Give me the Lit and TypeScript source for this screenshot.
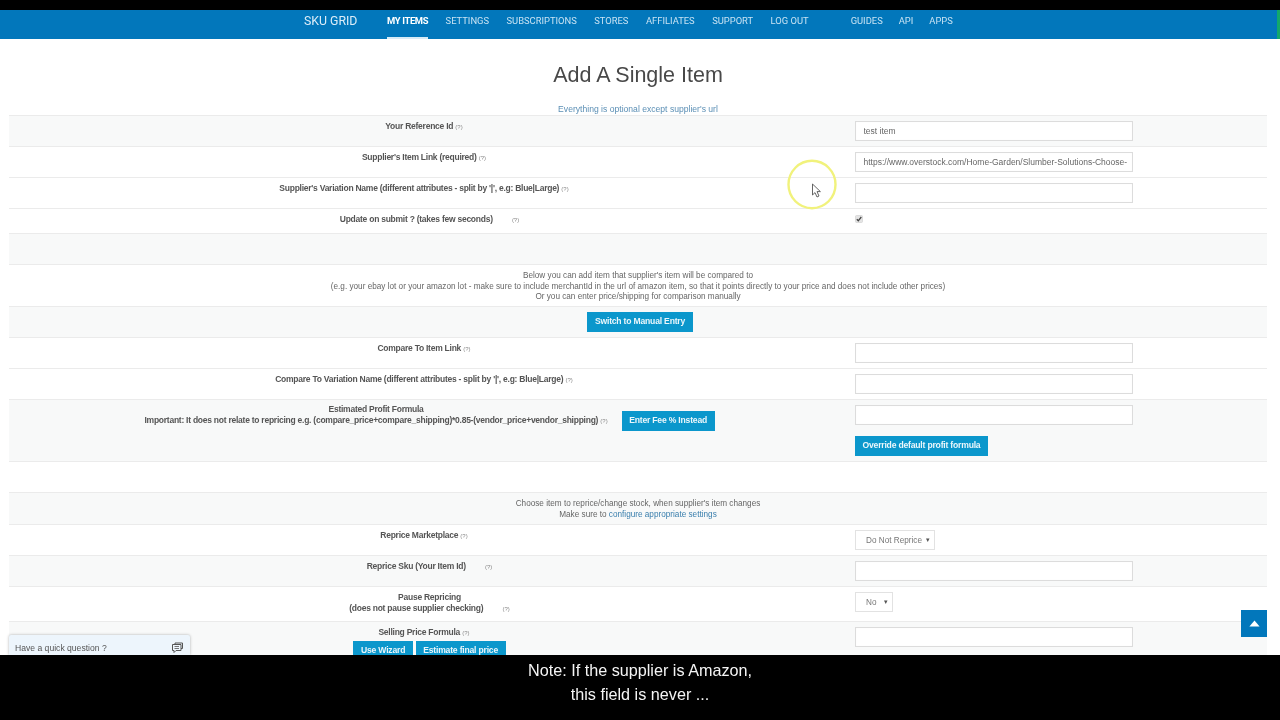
import { LitElement, html, css, nothing } from "lit";
import { customElement } from "lit/decorators.js";

type Row = {
  kind?: string;
  label?: string[];
  gapQ?: boolean;
  tone?: string;
  control?: unknown;
};

const input = (v = "") => html`<input class="field" .value=${v} />`;
const pick = (v: string, cls: string) =>
  html`<div class="pick ${cls}"><span>${v}</span><i>▾</i></div>`;

@customElement("app-root")
export class AppRoot extends LitElement {
  static styles = css`
    :host { display: flex; flex-direction: column; width: 1280px; height: 720px; position: relative; overflow: hidden; background: #fff; font-family: "Liberation Sans", Arial, sans-serif; filter: blur(0.35px); }
    .top { height: 10px; background: #000; flex: none; }
    nav { height: 29px; flex: none; background: #0277bb; display: flex; color: #c9e3f3; font-family: Roboto, "Liberation Sans", sans-serif; font-size: 9.4px; }
    .brand { margin-left: 304px; width: 83px; font-size: 12.3px; line-height: 23px; color: #dcedf8; }
    .links { display: flex; gap: 17.5px; }
    .links a { line-height: 21px; box-sizing: border-box; height: 29px; }
    .links a.on { color: #fff; font-weight: 700; letter-spacing: -0.35px; border-bottom: 2px solid #d8ebf6; }
    .links.second { margin-left: 42px; gap: 16px; }
    .edge { margin-left: auto; width: 3px; background: #13a86b; }
    main { flex: 1; min-height: 0; overflow: hidden; padding: 0 13px 0 9px; }
    h1 { margin: 0; padding-top: 23px; height: 37px; line-height: 26px; font-weight: 400; text-align: center; color: #484848; font-size: 21.5px; }
    .sub { text-align: center; font-size: 8.6px; line-height: 10px; height: 16px; padding-top: 5px; color: #5b8fb5; box-sizing: border-box; }
    .row { display: grid; grid-template-columns: 830px 1fr; border-top: 1px solid #ebebeb; padding: 5px 0; box-sizing: border-box; min-height: 31px; }
    .row.gray { background: #f8f9f9; }
    .row.check { min-height: 25px; }
    .row.tall { min-height: 35px; }
    .row.fee { min-height: 62px; }
    .row.text { display: block; text-align: center; font-size: 8.2px; line-height: 10.67px; color: #666; padding: 6px 0 3px; min-height: 0; }
    .row.text.two { height: 32px; }
    .row.text a { color: #3a7fad; }
    .row.center { display: flex; justify-content: center; padding-left: 4px; }
    .label { text-align: center; font-size: 8.5px; letter-spacing: -0.25px; line-height: 10.67px; color: #555; font-weight: 700; }
    .label.shift { padding-left: 11px; }
    .q { font-size: 6px; letter-spacing: 0; font-weight: 400; color: #888; }
    .q.gap { margin-left: 17px; }
    .value { padding-left: 16px; display: flex; flex-direction: column; align-items: flex-start; }
    .box { margin-top: 1px; }
    .field { box-sizing: border-box; width: 278px; height: 20px; margin: 0; border: 1px solid #dcdcdc; background: #fff; padding: 0 4px 0 7.5px; font: 8.5px "Liberation Sans", Arial, sans-serif; color: #666; outline: none; box-shadow: inset 0 0 1px #eee; }
    .pick { box-sizing: border-box; height: 20px; border: 1px solid #e2e2e2; background: #fff; display: flex; align-items: center; justify-content: space-between; padding: 0 4px 0 10px; font-size: 8.2px; color: #777; }
    .pick i { font-style: normal; font-size: 7px; color: #555; }
    .pick.wide { width: 80px; }
    .pick.small { width: 38px; }
    .btn { display: inline-block; box-sizing: border-box; height: 20px; line-height: 19px; background: #0b97cc; color: #eaf6fb; font-size: 8.6px; letter-spacing: -0.2px; font-weight: 700; padding: 0 7.5px; white-space: nowrap; }
    .over { margin-top: 10.5px; }
    .fee-label { display: flex; justify-content: center; align-items: flex-start; padding-left: 11px; margin-top: -1px; }
    .fee-label .btn { margin-left: 14px; margin-top: 7px; }
    .btns { display: flex; justify-content: center; gap: 3px; margin-top: 2px; padding-left: 11px; }
    .caption { height: 65px; flex: none; background: #000; color: #f4f4f4; text-align: center; font-size: 16.2px; line-height: 24px; padding-top: 3px; box-sizing: border-box; }
    .chat { position: absolute; left: 9px; top: 635px; width: 181px; height: 20px; background: #edf5fc; border-radius: 2px 2px 0 0; box-shadow: 0 0 3px rgba(0,0,0,.3); display: flex; align-items: center; justify-content: space-between; padding: 5px 6px 0 6px; box-sizing: border-box; font-size: 8.6px; color: #555; }
    .up { position: absolute; left: 1241px; top: 610px; width: 26px; height: 27px; background: #0277bb; display: flex; align-items: center; justify-content: center; }
    .mark { position: absolute; left: 786px; top: 159px; width: 52px; height: 52px; pointer-events: none; }
  `;

  rows: Row[] = [
    { tone: "gray", label: ["Your Reference Id"], control: input("test item") },
    { label: ["Supplier's Item Link (required)"], control: input("https://www.overstock.com/Home-Garden/Slumber-Solutions-Choose-") },
    { label: ["Supplier's Variation Name (different attributes - split by '|', e.g: Blue|Large)"], control: input() },
    { kind: "check", gapQ: true, label: ["Update on submit ? (takes few seconds)"], control: html`<svg width="8" height="8" viewBox="0 0 8 8" class="box"><rect x=".5" y=".5" width="7" height="7" rx="1" fill="#e4e4e4" stroke="#ccc" stroke-width=".6"/><path d="M1.8 4.2 3.3 5.8 6.3 2" fill="none" stroke="#444" stroke-width="1.3"/></svg>` },
    { tone: "gray" },
    { kind: "text", label: ["Below you can add item that supplier's item will be compared to", "(e.g. your ebay lot or your amazon lot - make sure to include merchantId in the url of amazon item, so that it points directly to your price and does not include other prices)", "Or you can enter price/shipping for comparison manually"] },
    { kind: "center", tone: "gray" },
    { label: ["Compare To Item Link"], control: input() },
    { label: ["Compare To Variation Name (different attributes - split by '|', e.g: Blue|Large)"], control: input() },
    { kind: "fee", tone: "gray" },
    {},
    { kind: "text2", tone: "gray" },
    { label: ["Reprice Marketplace"], control: pick("Do Not Reprice", "wide") },
    { tone: "gray", gapQ: true, label: ["Reprice Sku (Your Item Id)"], control: input() },
    { kind: "tall", gapQ: true, label: ["Pause Repricing", "(does not pause supplier checking)"], control: pick("No", "small") },
    { kind: "sell", tone: "gray", control: input() },
  ];

  renderLabel(r: Row) {
    const lines = r.label ?? [];
    return html`<div class="label ${r.gapQ ? "shift" : ""}">${lines.map((l, i) => html`${i ? html`<br />` : nothing}${l}${i === lines.length - 1 ? html` <span class="q ${r.gapQ ? "gap" : ""}">(?)</span>` : nothing}`)}</div>`;
  }

  renderRow(r: Row) {
    const g = r.tone === "gray" ? "gray" : "";
    if (r.kind === "text")
      return html`<div class="row text">${r.label!.map((l) => html`${l}<br />`)}</div>`;
    if (r.kind === "text2")
      return html`<div class="row text two ${g}">Choose item to reprice/change stock, when supplier's item changes<br />Make sure to <a>configure appropriate settings</a></div>`;
    if (r.kind === "center")
      return html`<div class="row center ${g}"><span class="btn">Switch to Manual Entry</span></div>`;
    if (r.kind === "fee")
      return html`<div class="row fee ${g}">
        <div class="fee-label">
          <div class="label">Estimated Profit Formula<br />Important: It does not relate to repricing e.g. (compare_price+compare_shipping)*0.85-(vendor_price+vendor_shipping) <span class="q">(?)</span></div>
          <span class="btn">Enter Fee % Instead</span>
        </div>
        <div class="value">${input()}<span class="btn over">Override default profit formula</span></div>
      </div>`;
    if (r.kind === "sell")
      return html`<div class="row ${g}">
        <div><div class="label">Selling Price Formula <span class="q">(?)</span></div>
        <div class="btns"><span class="btn">Use Wizard</span><span class="btn">Estimate final price</span></div></div>
        <div class="value">${r.control}</div>
      </div>`;
    return html`<div class="row ${r.kind ?? ""} ${g}">
      ${r.label ? this.renderLabel(r) : html`<div></div>`}
      <div class="value">${r.control ?? nothing}</div>
    </div>`;
  }

  render() {
    return html`
      <div class="top"></div>
      <nav>
        <div class="brand">SKU GRID</div>
        <div class="links">
          <a class="on">MY ITEMS</a><a>SETTINGS</a><a>SUBSCRIPTIONS</a><a>STORES</a><a>AFFILIATES</a><a>SUPPORT</a><a>LOG OUT</a>
        </div>
        <div class="links second"><a>GUIDES</a><a>API</a><a>APPS</a></div>
        <div class="edge"></div>
      </nav>
      <main>
        <h1>Add A Single Item</h1>
        <div class="sub">Everything is optional except supplier's url</div>
        ${this.rows.map((r) => this.renderRow(r))}
      </main>
      <div class="caption">Note: If the supplier is Amazon,<br />this field is never ...</div>

      <div class="chat"><span>Have a quick question ?</span>
        <svg width="13" height="13" viewBox="0 0 13 13" fill="none" stroke="#555" stroke-width="1"><path d="M4 3V2h7.5v5.5H10"/><path d="M1.5 3.5h8.5v6H5L3 11.5v-2H1.5z" fill="#edf5fc"/><path d="M3.5 5.5h4.5M3.5 7.5h4.5" stroke-width=".8"/></svg>
      </div>
      <div class="up"><svg width="11" height="7" viewBox="0 0 11 7"><path d="M5.5 .5 10.6 6.5H.4z" fill="#fff"/></svg></div>
      <svg class="mark" viewBox="0 0 52 52" fill="none">
        <ellipse cx="26" cy="25.5" rx="23.5" ry="23.7" stroke="#f1f27c" stroke-width="2.4"/>
        <path d="M26.5 25 V36 L29 33.6 L31 38 L33 37 L31 32.6 L34.4 32.6 Z" fill="#fff" stroke="#555" stroke-width=".9"/>
      </svg>
    `;
  }
}
